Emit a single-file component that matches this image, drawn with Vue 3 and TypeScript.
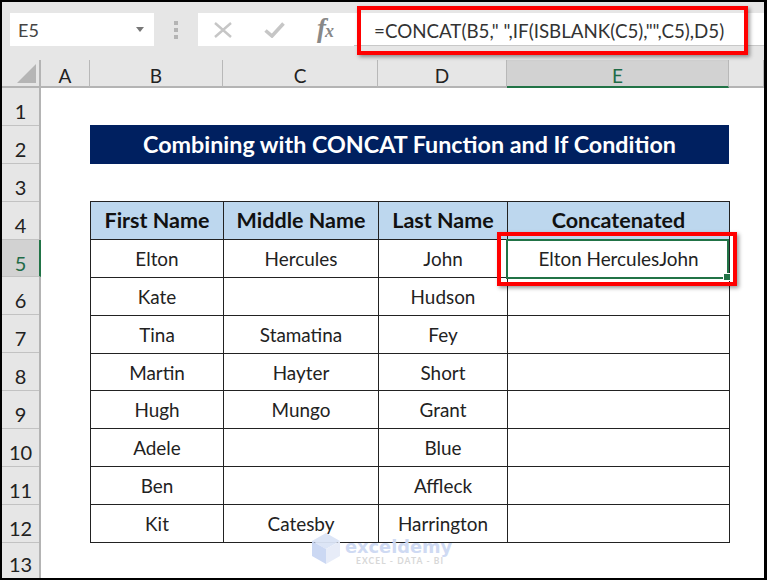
<script setup lang="ts">
const columns = ['A', 'B', 'C', 'D', 'E', '']
const rowNumbers = Array.from({ length: 13 }, (_, i) => i + 1)
const people: [string, string, string][] = [
  ['Elton', 'Hercules', 'John'],
  ['Kate', '', 'Hudson'],
  ['Tina', 'Stamatina', 'Fey'],
  ['Martin', 'Hayter', 'Short'],
  ['Hugh', 'Mungo', 'Grant'],
  ['Adele', '', 'Blue'],
  ['Ben', '', 'Affleck'],
  ['Kit', 'Catesby', 'Harrington'],
]
</script>

<template>
  <div class="frame">
    <div class="toolbar">
      <div class="namebox">
        <span>E5</span>
        <i class="caret"></i>
      </div>
      <div class="grip"><i></i><i></i><i></i></div>
      <div class="fbuttons">
        <svg width="18" height="16" viewBox="0 0 18 16"><path d="M1 1 17 15M17 1 1 15" stroke="#c6c6c6" stroke-width="2.4" fill="none" /></svg>
        <svg width="21" height="16" viewBox="0 0 21 16"><path d="M1.5 8.5 8 14 19.5 1.5" stroke="#c6c6c6" stroke-width="3.6" fill="none" /></svg>
        <span class="fx">f<span class="fx-x">x</span></span>
      </div>
      <div class="formula">=CONCAT(B5," ",IF(ISBLANK(C5),"",C5),D5)</div>
    </div>

    <div class="sheet">
      <div class="corner"><i></i></div>
      <div v-for="(c, i) in columns" :key="i" class="colhead" :class="{ active: c === 'E' }">{{ c }}</div>

      <div class="rowheads">
        <div v-for="n in rowNumbers" :key="n" class="rowhead" :class="{ active: n === 5 }">{{ n }}</div>
      </div>

      <div class="body">
        <div class="title">Combining with CONCAT Function and If Condition</div>
        <div class="table">
          <div class="cell head">First Name</div>
          <div class="cell head">Middle Name</div>
          <div class="cell head">Last Name</div>
          <div class="cell head last">Concatenated</div>
          <template v-for="(p, r) in people" :key="r">
            <div v-for="(v, c) in p" :key="c" class="cell">{{ v }}</div>
            <div class="cell last">{{ r === 0 ? 'Elton HerculesJohn' : '' }}</div>
          </template>
        </div>

        <div class="selection"><i></i></div>
        <div class="callout cell-callout"></div>

        <div class="watermark">
          <svg width="28" height="31" viewBox="0 0 28 31">
            <path d="M14 0 28 8 14 16 0 8Z" fill="#dbe4f6" />
            <path d="M0 8 14 16V31L0 23Z" fill="#c9d6f3" />
            <path d="M28 8 14 16V31L28 23Z" fill="#e6ecf8" />
          </svg>
          <div class="wm-text">
            <span class="wm-name">exceldemy</span>
            <span class="wm-sub">EXCEL - DATA - BI</span>
          </div>
        </div>
      </div>
    </div>

    <div class="callout formula-callout"></div>
  </div>
</template>

<style>
html,
body {
  margin: 0;
  background: #fff;
}
</style>

<style scoped>
.frame {
  position: relative;
  box-sizing: border-box;
  width: 767px;
  height: 580px;
  border: solid #000;
  border-width: 2px 3px 2px 2px;
  background: #e6e6e6;
  overflow: hidden;
  font-family: Lato, "Liberation Sans", sans-serif;
  color: #222;
}
.toolbar {
  box-sizing: border-box;
  height: 58px;
  padding-top: 11px;
  padding-left: 8px;
  display: flex;
  align-items: flex-start;
}
.namebox {
  box-sizing: border-box;
  width: 144px;
  height: 33px;
  background: #fff;
  display: flex;
  align-items: center;
  justify-content: space-between;
  padding: 0 10px 0 8px;
  font-size: 18px;
  color: #444;
}
.caret {
  width: 0;
  height: 0;
  border: solid transparent;
  border-width: 5px 4px 0;
  border-top-color: #777;
}
.grip {
  width: 44px;
  height: 33px;
  display: flex;
  flex-direction: column;
  align-items: center;
  justify-content: center;
  gap: 3px;
}
.grip i {
  width: 4px;
  height: 4px;
  background: #b4b4b4;
}
.fbuttons {
  box-sizing: border-box;
  width: 156px;
  height: 33px;
  background: #fff;
  display: flex;
  align-items: center;
  padding-left: 16px;
  gap: 32px;
}
.fx {
  font-family: "Liberation Serif", serif;
  font-style: italic;
  font-weight: 700;
  font-size: 27px;
  line-height: 30px;
  color: #888;
}
.fx-x {
  font-size: 18px;
  margin-left: -1px;
}
.formula {
  flex: 1;
  height: 33px;
  background: #fff;
  box-sizing: border-box;
  padding-left: 20px;
  font-size: 18.75px;
  line-height: 36px;
  color: #333;
  white-space: nowrap;
  border-bottom: 1px solid #c8c8c8;
}
.sheet {
  display: grid;
  grid-template-columns: 39px 49px 133px 155px 129px 222px 35px;
  grid-template-rows: 28px 490px;
}
.corner {
  border-bottom: 2px solid #b4b4b4;
  border-right: 2px solid #b4b4b4;
  position: relative;
  box-sizing: border-box;
}
.corner i {
  position: absolute;
  right: 3px;
  bottom: 3px;
  width: 0;
  height: 0;
  border-style: solid;
  border-width: 0 0 19px 19px;
  border-color: transparent transparent #b5b5b5 transparent;
}
.colhead {
  box-sizing: border-box;
  border-right: 1px solid #b8b8b8;
  border-bottom: 2px solid #b4b4b4;
  text-align: center;
  font-size: 19px;
  line-height: 31px;
  color: #222;
}
.colhead:last-of-type {
  border-right: none;
}
.colhead.active {
  background: #d2d2d2;
  color: #1f6b47;
  border-bottom: 2px solid #217346;
}
.rowheads {
  grid-column: 1;
  border-right: 2px solid #b4b4b4;
  display: grid;
  grid-template-rows: repeat(12, 37.9px) 35px;
  box-sizing: border-box;
}
.rowhead {
  box-sizing: border-box;
  border-bottom: 1px solid #c2c2c2;
  text-align: center;
  font-size: 20px;
  line-height: 46px;
  color: #222;
  height: 100%;
  overflow: hidden;
}
.rowhead:last-child {
  border-bottom: none;
  line-height: 42px;
}
.rowhead.active {
  background: #d2d2d2;
  color: #1f6b47;
  border-right: 2px solid #217346;
  margin-right: -2px;
}
.body {
  grid-column: 2 / -1;
  position: relative;
  background: #fff;
  padding: 37px 0 0 49px;
}
.title {
  box-sizing: border-box;
  width: 639px;
  height: 39px;
  background: #002060;
  color: #fff;
  font-weight: 700;
  font-size: 23.3px;
  line-height: 39px;
  text-align: center;
}
.table {
  margin-top: 37px;
  width: 640px;
  box-sizing: border-box;
  border-top: 1px solid #222;
  border-left: 1px solid #222;
  display: grid;
  grid-template-columns: 133px 155px 129px 222px;
  grid-auto-rows: 37.9px;
}
.cell {
  box-sizing: border-box;
  border-right: 1px solid #222;
  border-bottom: 1px solid #222;
  display: flex;
  align-items: center;
  justify-content: center;
  font-size: 18.9px;
  color: #222;
}
.head {
  background: #bdd7ee;
  font-weight: 700;
  font-size: 21.5px;
  color: #111;
}
.selection {
  position: absolute;
  left: 465px;
  top: 151px;
  width: 223px;
  height: 40px;
  box-sizing: border-box;
  border: 2px solid #217346;
}
.selection i {
  position: absolute;
  right: -4px;
  bottom: -4px;
  width: 6px;
  height: 6px;
  background: #217346;
  border: 1px solid #fff;
}
.callout {
  position: absolute;
  box-sizing: border-box;
  border: 4px solid #f00;
  box-shadow: 2px 2px 4px rgba(0, 0, 0, 0.4);
}
.cell-callout {
  left: 456px;
  top: 144px;
  width: 240px;
  height: 54px;
}
.formula-callout {
  left: 355px;
  top: 4px;
  width: 391px;
  height: 49px;
}
.watermark {
  position: absolute;
  left: 271px;
  top: 445px;
  display: flex;
  gap: 5px;
  opacity: 0.95;
}
.wm-text {
  display: flex;
  flex-direction: column;
  line-height: 1;
  padding-top: 4px;
}
.wm-name {
  font-family: "DejaVu Sans", sans-serif;
  font-weight: 700;
  font-size: 17.8px;
  line-height: 19px;
  color: #cdd9f3;
}
.wm-sub {
  font-size: 8.5px;
  letter-spacing: 1.1px;
  color: #d6d6d6;
  font-weight: 700;
  padding-left: 11px;
  line-height: 10px;
}
</style>
